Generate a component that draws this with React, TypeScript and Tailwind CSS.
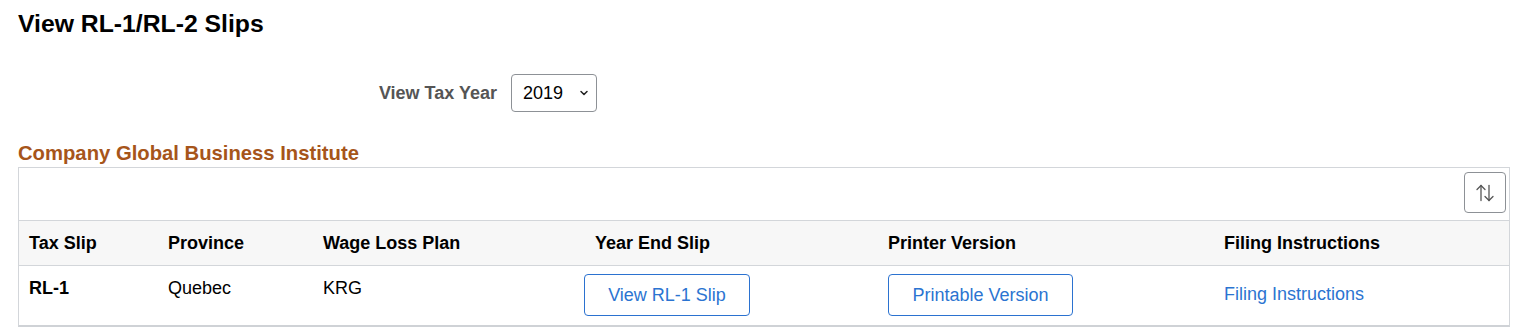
import React from "react";

const columns = [
  { label: "Tax Slip", width: "w-[139px]" },
  { label: "Province", width: "w-[155px]" },
  { label: "Wage Loss Plan", width: "w-[272px]" },
  { label: "Year End Slip", width: "w-[293px]" },
  { label: "Printer Version", width: "w-[336px]" },
  { label: "Filing Instructions", width: "" },
];

function SortIcon() {
  return (
    <svg width="20" height="20" viewBox="0 0 20 20" fill="none" stroke="#555" strokeWidth="1.3" strokeLinecap="round" strokeLinejoin="round">
      <path d="M6 2.5v15" />
      <path d="M2 6.5l4-4 4 4" />
      <path d="M14 2.5v15" />
      <path d="M10 13.5l4 4 4-4" />
    </svg>
  );
}

export default function App() {
  return (
    <div className="w-[1528px] h-[335px] bg-white font-[Liberation_Sans] text-black">
      <div className="px-[18px] pt-[10px]">
        {/* Page title */}
        <h1 className="text-[24.75px] leading-[28px] font-bold">View RL-1/RL-2 Slips</h1>

        {/* Tax year selector */}
        <div className="flex items-center mt-[36px]">
          <div className="w-[479px] text-right text-[18px] font-bold text-[#555555]">View Tax Year</div>
          <div className="ml-[14px] flex items-center justify-between w-[86px] h-[38px] border border-[#8d9196] rounded-[4px] pl-[11px] pr-[6px] text-[18px]">
            <span>2019</span>
            <svg width="12" height="12" viewBox="0 0 12 12" fill="none" stroke="#222" strokeWidth="1.5" strokeLinecap="round" strokeLinejoin="round">
              <path d="M3 4.5l3 3 3-3" />
            </svg>
          </div>
        </div>

        {/* Company group */}
        <h2 className="mt-[30px] text-[20.25px] leading-[22px] font-bold text-[#a6551a]">Company Global Business Institute</h2>

        <div className="mt-[3px] border border-[#d3d6da] border-b-2 border-b-[#cfd2d6] w-[1492px]">
          <div className="h-[52px] flex items-start justify-end pt-[4px] pr-[3px]">
            <button className="w-[42px] h-[41px] border border-[#8d9196] rounded-[4px] flex items-center justify-center bg-white">
              <SortIcon />
            </button>
          </div>

          <div className="flex h-[46px] items-center bg-[#f7f7f7] border-t border-b border-[#d3d6da]">
            {columns.map((c) => (
              <div key={c.label} className={`${c.width} pl-[10px] text-[18px] font-bold`}>
                {c.label}
              </div>
            ))}
          </div>

          <div className="flex h-[59px] text-[18px]">
            <div className="w-[139px] pl-[10px] pt-[11px] leading-[22px] font-bold">RL-1</div>
            <div className="w-[155px] pl-[10px] pt-[11px] leading-[22px]">Quebec</div>
            <div className="w-[272px] pl-[10px] pt-[11px] leading-[22px]">KRG</div>
            <div className="w-[293px] pt-[8px]">
              <button className="-ml-[1px] w-[166px] h-[42px] border border-[#2b72d0] rounded-[4px] text-[#2b74d1] text-[18px] bg-white">View RL-1 Slip</button>
            </div>
            <div className="w-[336px] pl-[10px] pt-[8px]">
              <button className="w-[185px] h-[42px] border border-[#2b72d0] rounded-[4px] text-[#2b74d1] text-[18px] bg-white">Printable Version</button>
            </div>
            <div className="pl-[10px] pt-[17px] leading-[22px]">
              <a className="text-[#2b74d1]" href="#">Filing Instructions</a>
            </div>
          </div>
        </div>
      </div>
    </div>
  );
}
